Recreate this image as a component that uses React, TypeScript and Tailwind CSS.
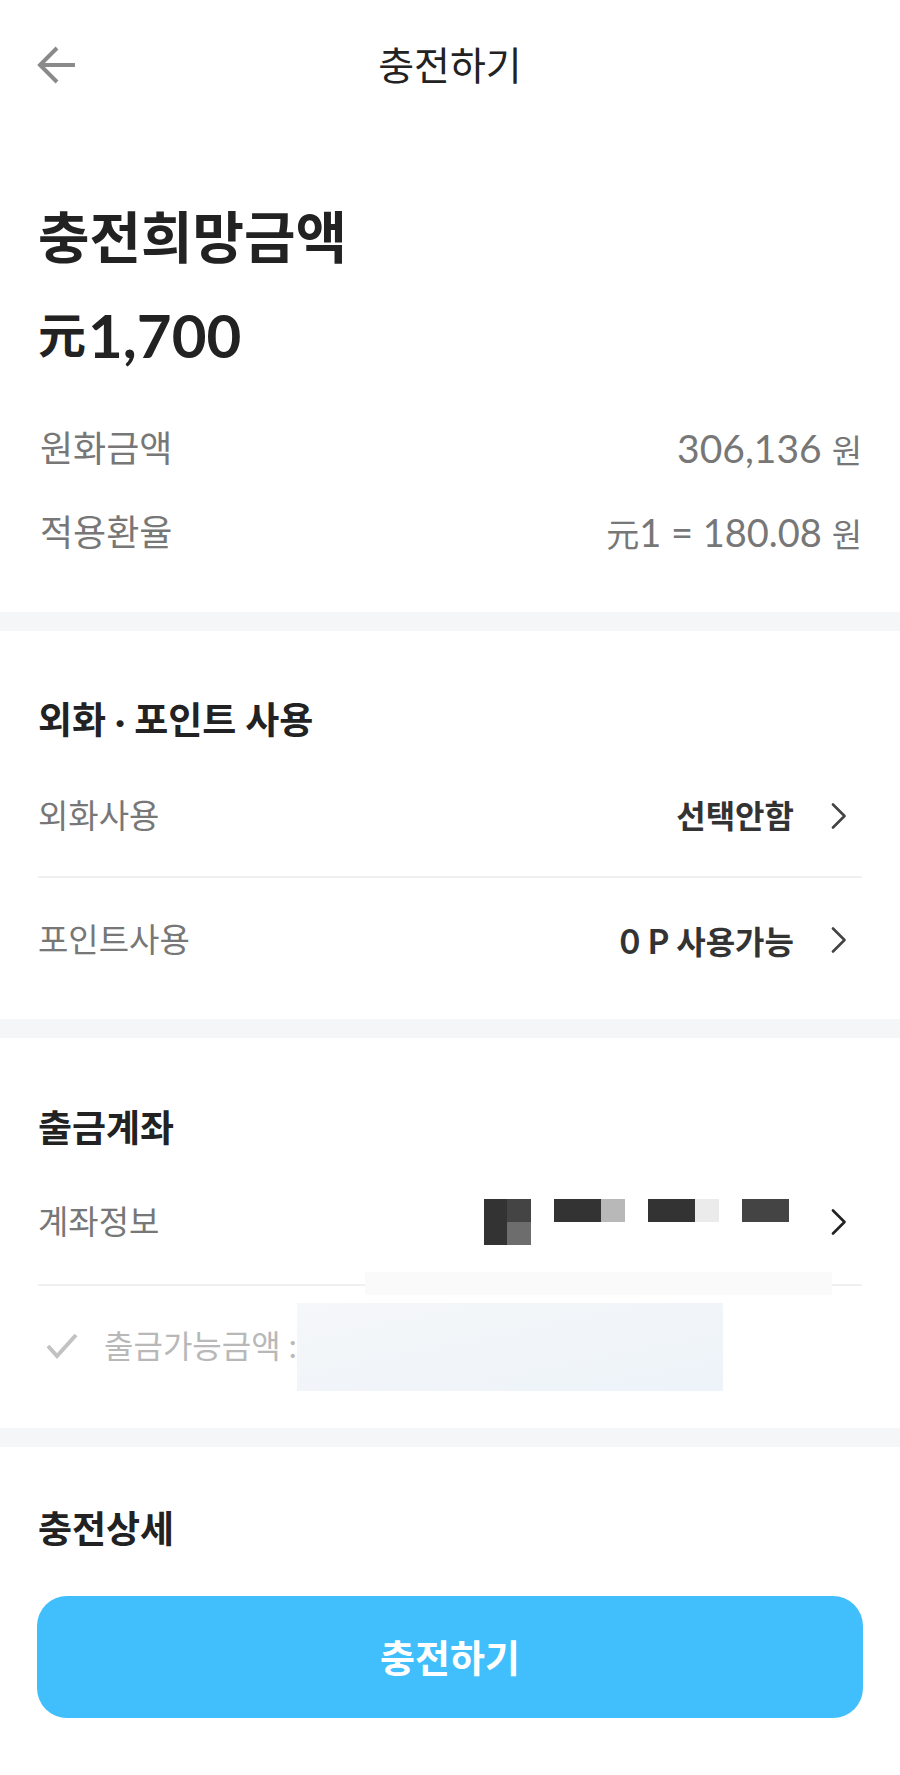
import React from 'react';

const FONT = "font-['Lato','Noto_Sans_CJK_KR',sans-serif]";

const Chevron = ({ color = '#444' }: { color?: string }) => (
    <svg width="16" height="26" viewBox="0 0 16 26" fill="none" className="shrink-0">
        <polyline points="2,1.5 13.5,13 2,24.5" stroke={color} strokeWidth="2.6" strokeLinecap="round" strokeLinejoin="round" />
    </svg>
);

const Band = () => <div className="h-[19px] bg-[#f5f6f8]" />;

const SectionTitle = ({ children }: { children: React.ReactNode }) => (
    <h2 className="h-[50px] flex items-center text-[37px] font-bold text-[#222]">{children}</h2>
);

const Mosaic = () => (
    <div className="flex items-start gap-[23px] h-[46px]">
        <div className="flex">
            <div className="w-[23px] h-[46px] bg-[#333]" />
            <div className="flex flex-col">
                <div className="w-[24px] h-[23px] bg-[#444]" />
                <div className="w-[24px] h-[23px] bg-[#6d6d6d]" />
            </div>
        </div>
        <div className="flex">
            <div className="w-[47px] h-[23px] bg-[#333]" />
            <div className="w-[24px] h-[23px] bg-[#b8b8b8]" />
        </div>
        <div className="flex">
            <div className="w-[47px] h-[23px] bg-[#333]" />
            <div className="w-[24px] h-[23px] bg-[#ebebeb]" />
        </div>
        <div className="w-[47px] h-[23px] bg-[#444]" />
    </div>
);

export default function App() {
    return (
        <div className={`${FONT} bg-white min-h-[1775px] w-[900px] text-[#222]`}>
            {/* header */}
            <header className="h-[130px] grid grid-cols-[1fr_auto_1fr] items-center px-[37px]">
                <svg width="40" height="38" viewBox="0 0 40 38" fill="none">
                    <path d="M38 19H3M20 2L3 19L20 36" stroke="#8a8a8a" strokeWidth="4" />
                </svg>
                <h1 className="text-[39px] font-normal text-[#222]">충전하기</h1>
                <div />
            </header>

            {/* amount */}
            <section className="pl-[40px] pr-[38px] pt-[77px] pb-[50px]">
                <div className="h-[60px] flex items-center text-[56px] font-bold -ml-[2px]">충전희망금액</div>
                <div className="h-[70px] mt-[33px] flex items-center font-bold -ml-[2px]">
                    <span className="text-[48px] mr-[2px]">元</span>
                    <span className="text-[60px]">1,700</span>
                </div>
                <div className="h-[60px] mt-[48px] flex items-center justify-between text-[#777]">
                    <span className="text-[36px]">원화금액</span>
                    <span className="text-[39px]">
                        306,136 <span className="text-[33px]">원</span>
                    </span>
                </div>
                <div className="h-[60px] mt-[24px] flex items-center justify-between text-[#777]">
                    <span className="text-[36px]">적용환율</span>
                    <span className="text-[38px]">
                        <span className="text-[33px]">元</span>1 = 180.08 <span className="text-[33px]">원</span>
                    </span>
                </div>
            </section>

            <Band />

            {/* foreign currency / point */}
            <section className="px-[38px] pt-[64px] pb-[17px]">
                <SectionTitle>외화 · 포인트 사용</SectionTitle>
                <div className="h-[100px] mt-[21px] mb-[10px] flex items-center justify-between">
                    <span className="text-[33px] text-[#777]">외화사용</span>
                    <div className="flex items-center gap-[37px] pr-[15px]">
                        <span className="text-[32px] font-bold text-[#333]">선택안함</span>
                        <Chevron />
                    </div>
                </div>
                <div className="h-[2px] bg-[#f0f0f0]" />
                <div className="h-[124px] flex items-center justify-between">
                    <span className="text-[33px] text-[#777]">포인트사용</span>
                    <div className="flex items-center gap-[37px] pr-[15px]">
                        <span className="font-bold text-[#333]">
                            <span className="text-[34px]">0 P </span>
                            <span className="text-[32px]">사용가능</span>
                        </span>
                        <Chevron />
                    </div>
                </div>
            </section>

            <Band />

            {/* withdrawal account */}
            <section className="px-[38px] pt-[65px] pb-[32px]">
                <SectionTitle>출금계좌</SectionTitle>
                <div className="h-[100px] mt-[19px] mb-[12px] flex items-center justify-between">
                    <span className="text-[33px] text-[#777]">계좌정보</span>
                    <div className="flex items-center gap-[42px] pr-[15px]">
                        <Mosaic />
                        <Chevron color="#222" />
                    </div>
                </div>
                <div className="relative h-[2px] bg-[#f0f0f0]">
                    <div className="absolute left-[327px] top-[-12px] w-[467px] h-[23px] bg-[#fafafa]" />
                </div>
                <div className="relative h-[100px] mt-[10px] flex items-center gap-[26px]">
                    <svg width="32" height="28" viewBox="0 0 32 28" fill="none" className="ml-[8px]">
                        <path d="M2 14L11 24L30 3" stroke="#c2c2c2" strokeWidth="4" />
                    </svg>
                    <span className="text-[32px] text-[#b8b8b8]">출금가능금액 :</span>
                    <div className="absolute left-[259px] top-[7px] w-[426px] h-[88px] bg-gradient-to-br from-[#f5f7f9] to-[#edf3f9]" />
                </div>
            </section>

            <Band />

            {/* detail + button */}
            <section className="px-[37px] pt-[57px]">
                <div className="px-[1px]">
                    <SectionTitle>충전상세</SectionTitle>
                </div>
                <button className="mt-[42px] w-full h-[122px] rounded-[30px] bg-[#40bffc] text-white text-[38px] font-bold">
                    충전하기
                </button>
            </section>
        </div>
    );
}
